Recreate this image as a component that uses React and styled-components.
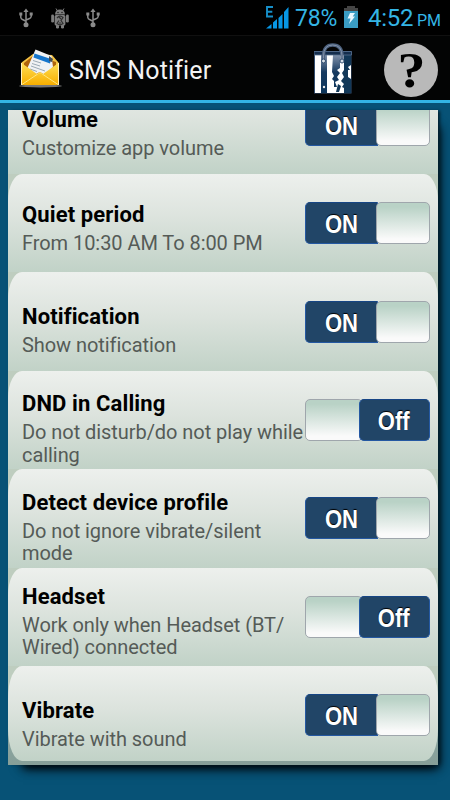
import React from "react";
import styled, { createGlobalStyle } from "styled-components";

const settings = [
  { title: "Volume", lines: ["Customize app volume"], on: true },
  { title: "Quiet period", lines: ["From 10:30 AM To 8:00 PM"], on: true, lift: 4 },
  { title: "Notification", lines: ["Show notification"], on: true },
  { title: "DND in Calling", lines: ["Do not disturb/do not play while", "calling"], on: false },
  { title: "Detect device profile", lines: ["Do not ignore vibrate/silent", "mode"], on: true },
  { title: "Headset", lines: ["Work only when Headset (BT/", "Wired) connected"], on: false, lift: 4 },
  { title: "Vibrate", lines: ["Vibrate with sound"], on: true },
];

const UsbIcon = () => (
  <svg width="14" height="20" viewBox="0 0 14 20" fill="none" stroke="#8b8b8b" strokeWidth="1.5">
    <path d="M7 3V16M1.8 6.5V9.5Q2 11 4 11.8L7 13.2M12.2 6.5V8.5Q12 10 10 10.8L7 12" />
    <path d="M7 .5L9.6 4H4.4Z" fill="#8b8b8b" stroke="none" />
    <circle cx="7" cy="16.8" r="2.5" fill="#8b8b8b" stroke="none" />
    <path d="M.3 4.5h3v3h-3zM10.7 4.5h3v3h-3z" fill="#8b8b8b" stroke="none" />
  </svg>
);

const DroidIcon = () => (
  <svg width="18" height="21" viewBox="0 0 18 21">
    <g fill="#7d7d7d">
      <path d="M4 6.5Q4.300 1.500 9 1.500Q13.700 1.500 14 6.500Z" />
      <rect x="3.600" y="7" width="10.800" height="10.500" rx="1.500" />
      <rect x=".2" y="6.500" width="2.800" height="8" rx="1.300" />
      <rect x="15" y="6.500" width="2.800" height="8" rx="1.300" />
      <rect x="5" y="16" width="3" height="4.500" rx="1.300" />
      <rect x="10" y="16" width="3" height="4.500" rx="1.300" />
    </g>
    <path d="M5 .5L6.500 3M13 .5L11.500 3" stroke="#7d7d7d" />
    <path d="M6 10Q9 6.500 12 9.500L10 12.500L12 15.500Q9 18 6 15.500L8 12.500M8 9L10 11M8 15H10" fill="none" stroke="#303030" strokeWidth="1.200" />
    <circle cx="7" cy="4.500" r=".7" fill="#111" />
    <circle cx="11" cy="4.500" r=".7" fill="#111" />
  </svg>
);

const SignalIcon = () => (
  <svg width="23" height="23" viewBox="0 0 23 23">
    <path d="M7 1H1V10.500H7M1 5.700H6.300" fill="none" stroke="#168fc9" strokeWidth="1.900" />
    <path d="M0 22.500L5.500 18V22.500ZM7 16.500L11 13V22.500H7ZM12.500 12L16.500 8V22.500H12.500ZM18 6L22.500 1V22.500H18Z" fill="#0797e6" />
  </svg>
);

const BatteryIcon = () => (
  <svg width="14" height="22" viewBox="0 0 14 22">
    <path d="M3 0H11V2H14V5H0V2H3Z" fill="#454545" />
    <path d="M0 5H14V22H0Z" fill="#3a9dc4" />
    <path d="M6 7H11L8.700 10.500H11L5 18L6.500 12.500H3.500Z" fill="#e8f7ff" />
  </svg>
);

const MailIcon = () => (
  <svg width="43" height="39" viewBox="0 0 43 39">
    <defs>
      <linearGradient id="envelope" x2="0" y2="1">
        <stop stopColor="#ffdf55" />
        <stop offset="1" stopColor="#f7ae00" />
      </linearGradient>
    </defs>
    <ellipse cx="21.500" cy="37" rx="21.500" ry="1.500" fill="#777" />
    <path d="M2.500 13.500L14 5L33 6L39.500 13.500V36H2.500Z" fill="#f4c343" />
    <path d="M5 14L15 6L37 13V23L21 31L5 21Z" fill="#af640d" />
    <path d="M16.500 .5L32.500 7L34 18L26 26L21 23Q18 24 16 26L8 20Z" fill="#f0f2f4" />
    <path d="M15.500 4.500L32 10L31 14.500L14.500 8.500Z" fill="#1676cc" />
    <path d="M14 11.500L22 14M13 14.500L21 17M12 17L26 22M11 20L18 22.500" stroke="#9aa9b5" strokeWidth="1" />
    <path d="M30 7L34 10L33 13L30 12Z" fill="#444c55" />
    <path d="M2.500 14V36H39.500V14L24 25Q21 22 18 25Z" fill="url(#envelope)" />
    <path d="M3 35.500L18 25.500Q21 22 24 25.500L39 35.500" fill="none" stroke="#ffe67b" strokeWidth="1" />
    <path d="M2.500 14V36M39.500 14V36" stroke="#fff0c0" />
  </svg>
);

const BagIcon = () => (
  <svg width="38" height="51" viewBox="0 0 38 51">
    <defs>
      <linearGradient id="stripe" x2="0" y2="1">
        <stop stopColor="#8292ab" />
        <stop offset=".45" stopColor="#173a60" />
        <stop offset="1" stopColor="#0c355a" />
      </linearGradient>
    </defs>
    <path d="M0 8H37.500V50.500H0Z" fill="#344e70" />
    <path d="M1 12H37V50H1Z" fill="#fff" />
    <path d="M7 12H13V50H7ZM19 12H26V25L23 27L26 30L23 34L25 37L21 39L23 44H20V38L18 36L20 33L18 29Z" fill="url(#stripe)" />
    <path d="M30 12H37V22L34 24L36 27H34V34L37 36V50H30V45L28 44L30 41L27 38L30 34L28 30L30 27Z" fill="#123858" />
    <path d="M24 41L27 43L25 49H22ZM33 39H36L34 45Z" fill="#123858" />
    <path d="M0 8.500H37.500V12H0Z" fill="#152e4d" stroke="#587190" strokeWidth=".8" />
    <path d="M9.500 17V13Q9.500 2 18.700 2Q28 2 28 13V17" fill="none" stroke="#4d627f" strokeWidth="3.400" />
    <path d="M9.500 17V13Q9.500 2 18.700 2Q28 2 28 13V17" fill="none" stroke="#8292a9" strokeWidth="1" />
    <g fill="#d7dfe8" stroke="#304c6e">
      <circle cx="9.500" cy="18" r="2" />
      <circle cx="28" cy="18" r="2" />
    </g>
    <circle cx="10" cy="44" r="1.200" fill="#eee" />
  </svg>
);

const App = () => {
  return (
    <>
      <GlobalStyle />
      <Screen>
        <StatusBar>
          <Notices>
            <UsbIcon />
            <DroidIcon />
            <UsbIcon />
          </Notices>
          <SystemInfo>
            <SignalIcon />
            <Percent>78%</Percent>
            <BatteryIcon />
            <Clock>4:52</Clock>
            <Period>PM</Period>
          </SystemInfo>
        </StatusBar>
        <ActionBar>
          <MailIcon />
          <AppTitle>SMS Notifier</AppTitle>
          <BagIcon />
          <Help>
            <span>?</span>
          </Help>
        </ActionBar>
        <Content>
          <Panel>
            <List>
              {settings.map((item) => (
                <Row key={item.title}>
                  <Info $lift={item.lift}>
                    <RowTitle>{item.title}</RowTitle>
                    {item.lines.map((line) => (
                      <Description key={line}>{line}</Description>
                    ))}
                  </Info>
                  <Switch $on={item.on}>
                    <Label $on={item.on}>
                      <span>{item.on ? "ON" : "Off"}</span>
                    </Label>
                    <Thumb $on={item.on} />
                  </Switch>
                </Row>
              ))}
            </List>
          </Panel>
        </Content>
      </Screen>
    </>
  );
};

const GlobalStyle = createGlobalStyle`
  * {
    box-sizing: border-box;
  }

  body {
    margin: 0;
    background: #075276;
    font-family: Roboto, "Liberation Sans", sans-serif;
  }

  svg {
    display: block;
    flex: none;
  }
`;

const Screen = styled.div`
  display: flex;
  flex-direction: column;
  width: 450px;
  height: 800px;
  overflow: hidden;
  background: #075276;
`;

const StatusBar = styled.div`
  display: flex;
  justify-content: space-between;
  height: 36px;
  padding: 6px 9px 0 19px;
  background: #000;
  border-bottom: 1px solid #101010;
`;

const Notices = styled.div`
  display: flex;
  gap: 17.5px;
  padding-top: 2px;
`;

const SystemInfo = styled.div`
  display: flex;
  height: 23px;
  color: #34b5e5;
  line-height: 25px;
  white-space: nowrap;
`;

const Percent = styled.span`
  width: 41px;
  margin: 0 8px 0 6px;
  font-size: 23px;
  letter-spacing: -0.2px;
`;

const Clock = styled.span`
  width: 44px;
  margin-left: 10px;
  font-size: 24px;
  letter-spacing: -0.3px;
`;

const Period = styled.span`
  width: 24px;
  margin-left: 5px;
  font-size: 16px;
  line-height: 29px;
`;

const ActionBar = styled.div`
  display: flex;
  align-items: center;
  height: 67px;
  padding: 0 12px 0 19px;
  background: #030404;
  border-bottom: 3px solid #33b5e5;
`;

const AppTitle = styled.h1`
  flex: 1;
  margin: 5px 0 0 7px;
  color: #f3f3f3;
  font-size: 25px;
  font-weight: 400;
  letter-spacing: 0.15px;
`;

const Help = styled.div`
  width: 54px;
  height: 54px;
  margin: 4px 0 0 32px;
  border-radius: 50%;
  background: #b9b9b9;
  color: #000;
  font: bold 50px/55px "Liberation Serif", serif;
  text-align: center;

  span {
    display: inline-block;
    transform: scaleX(1.12);
  }
`;

const Content = styled.div`
  flex: 1;
  padding: 7px 12px 0 8px;
`;

const Panel = styled.div`
  height: 655px;
  box-shadow: 3px 0 3px -1px #00202f, 7px 10px 12px -8px #000, 8px 10px 8px -7px #001c2a;
`;

const List = styled.div`
  display: flex;
  flex-direction: column;
  justify-content: flex-end;
  height: 655px;
  overflow: hidden;
  background: linear-gradient(#becdbf 88%, #8ba7a5 94%, #879f98);
`;

const Row = styled.div`
  display: flex;
  flex: none;
  align-items: center;
  height: 98.4px;
  padding: 0 8px 0 14px;
  border-radius: 14px 14px 0 0 / 27px 27px 0 0;
  background: linear-gradient(#edf0ed, #dce3dd 45%, #c1d2c7);

  &:last-child {
    height: 94.500px;
    margin-bottom: 4.5px;
    padding-top: 4px;
    border-radius: 14px / 32px;
  }
`;

const Info = styled.div`
  flex: none;
  width: 283px;
  margin-top: ${(props) => -2 * (props.$lift || 0)}px;
  padding-top: 17px;
  white-space: nowrap;
`;

const RowTitle = styled.h2`
  margin: 0 0 4px;
  color: #000;
  font-size: 22px;
  font-weight: 700;
  line-height: 26px;
  letter-spacing: 0.12px;
`;

const Description = styled.div`
  color: #555b57;
  font-size: 20px;
  line-height: 22.4px;
  letter-spacing: -0.06px;
`;

const Switch = styled.div`
  display: flex;
  flex-direction: ${(props) => (props.$on ? "row" : "row-reverse")};
  width: 124.5px;
  height: 42px;
  border-radius: 5px;
`;

const Label = styled.div`
  position: relative;
  z-index: 1;
  flex: none;
  width: ${(props) => (props.$on ? 73 : 71)}px;
  border: 1px solid #2458a2;
  border-top-color: #164584;
  border-radius: ${(props) => (props.$on ? "5px 0 0 5px" : "5px")};
  background: #214567;
  color: #fff;
  font: bold 26px/43px "Liberation Sans", sans-serif;
  text-align: center;
  text-shadow: 0 -1px 1px #000;

  span {
    display: inline-block;
    transform: scaleX(0.85);
  }
`;

const Thumb = styled.div`
  flex: 1;
  margin: ${(props) => (props.$on ? "0 0 0 -2px" : "0 -4px 0 0")};
  border: 1px solid #9fa6ac;
  border-radius: 5px;
  background: linear-gradient(#b9d2c6 10%, #fafafa 90%);
  position: relative;
  z-index: ${(props) => (props.$on ? 1 : 0)};
`;

export default App;
